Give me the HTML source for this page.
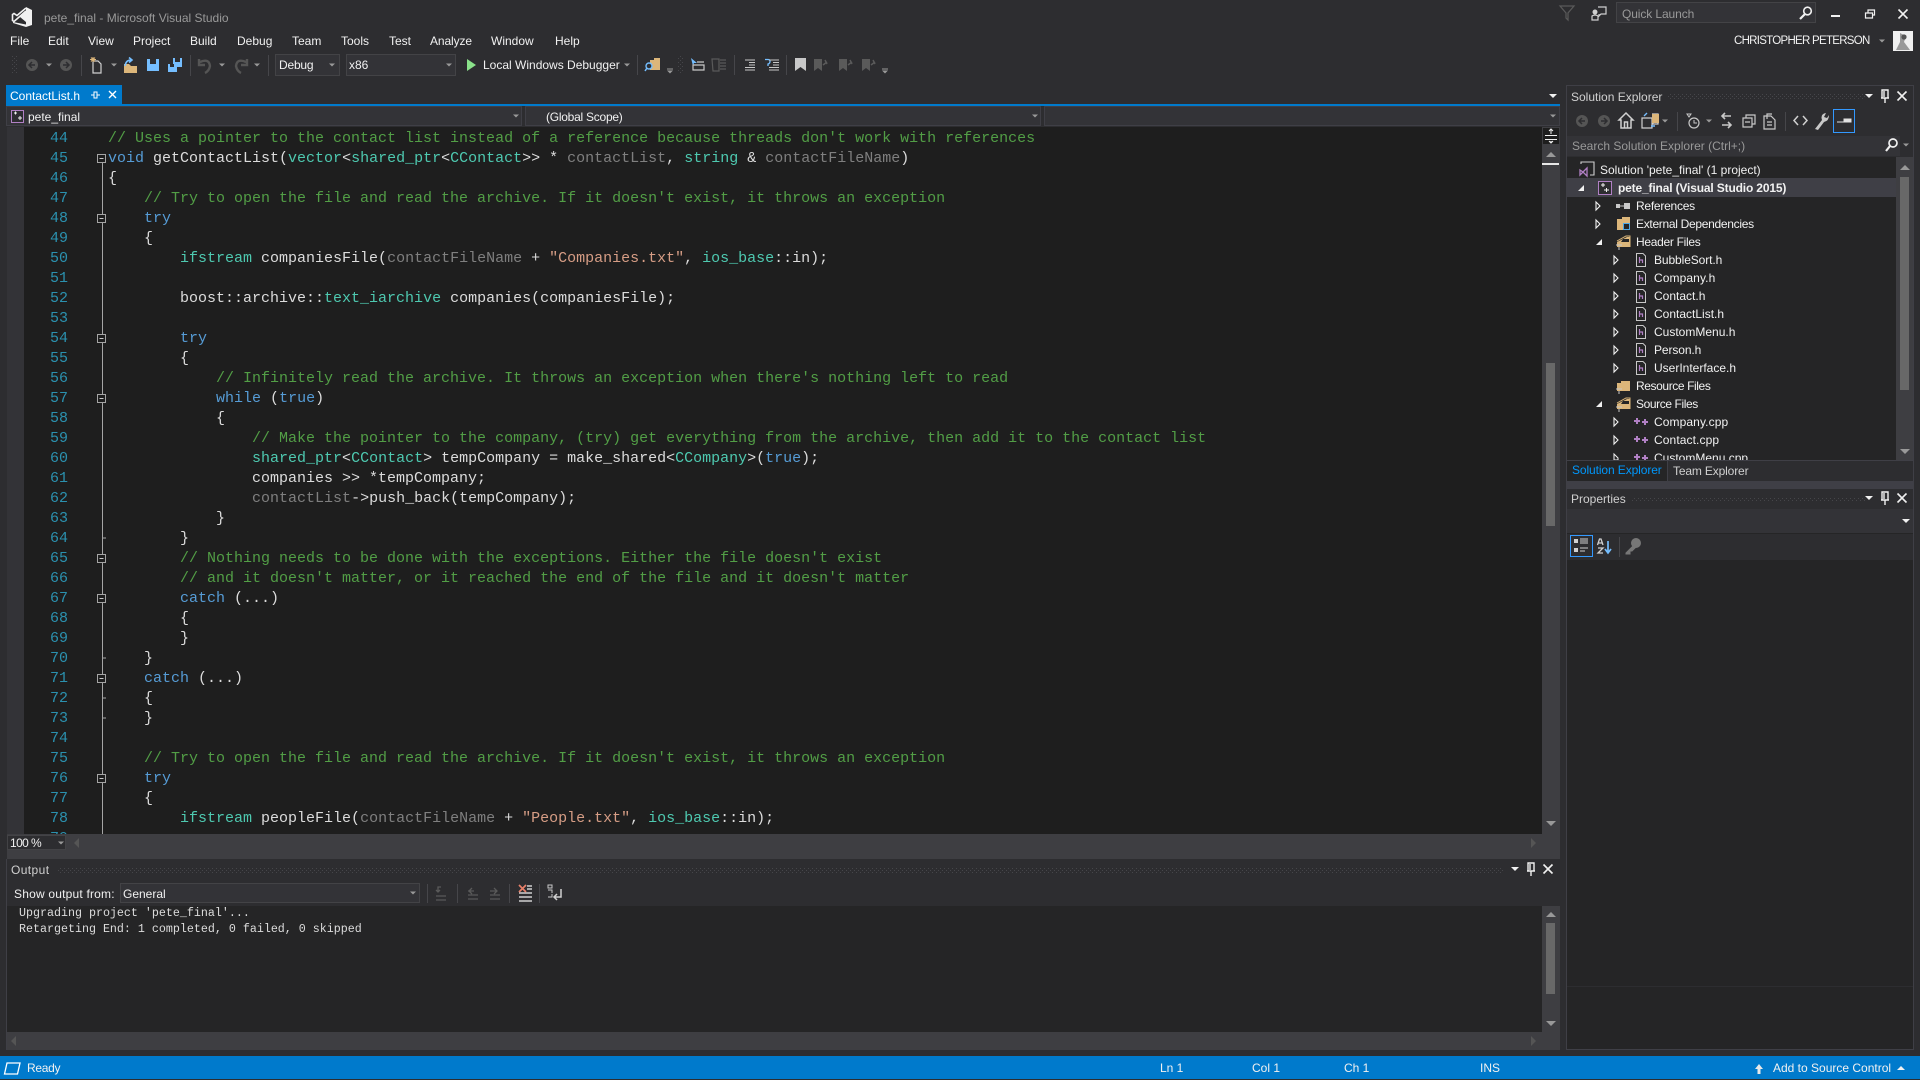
<!DOCTYPE html>
<html><head><meta charset="utf-8"><title>pete_final - Microsoft Visual Studio</title>
<style>
html,body{margin:0;padding:0;background:#2d2d30;width:1920px;height:1080px;overflow:hidden}
.b{position:absolute}
.t{position:absolute;font:12px/16px "Liberation Sans",sans-serif;color:#f1f1f1;white-space:pre}
#ed{position:absolute;left:24px;top:127px;width:1518px;height:707px;background:#1e1e1e;overflow:hidden}
.l,.n{position:absolute;font:15px/20px "Liberation Mono",monospace;white-space:pre;height:20px;margin-top:1px}
.l{left:84px;color:#dcdcdc}
.n{left:0;width:44px;text-align:right;color:#2b91af}
.c{color:#529e46}.k{color:#569cd6}.y{color:#4ec9b0}.s{color:#d69d85}.p{color:#7f7f7f}
.o{position:absolute;font:11.67px/15px "Liberation Mono",monospace;color:#dcdcdc;white-space:pre;left:19px}
svg{position:absolute;left:0;top:0}
</style></head><body>

<!-- panels -->
<div class="b" style="left:6px;top:85px;width:116px;height:19px;background:#007acc"></div>
<div class="b" style="left:6px;top:104px;width:1554px;height:2px;background:#007acc"></div>
<div class="b" style="left:6px;top:106px;width:516px;height:20px;background:#333337;border:1px solid #3f3f46;box-sizing:border-box"></div>
<div class="b" style="left:525px;top:106px;width:516px;height:20px;background:#333337;border:1px solid #3f3f46;box-sizing:border-box"></div>
<div class="b" style="left:1044px;top:106px;width:516px;height:20px;background:#333337;border:1px solid #3f3f46;box-sizing:border-box"></div>
<div class="b" style="left:7px;top:127px;width:17px;height:707px;background:#333337"></div>
<div class="b" style="left:1542px;top:127px;width:18px;height:707px;background:#3e3e42"></div>
<div class="b" style="left:7px;top:834px;width:1553px;height:25px;background:#3e3e42"></div>
<div class="b" style="left:7px;top:835px;width:59px;height:15px;background:#2d2d30;border:1px solid #434346;box-sizing:border-box"></div>
<div class="b" style="left:1546px;top:363px;width:9px;height:163px;background:#686868"></div>
<div class="b" style="left:1542px;top:163px;width:17px;height:2px;background:#e8e8e8"></div>
<div class="b" style="left:1543px;top:128px;width:16px;height:16px;background:#1e1e1e"></div>

<div class="b" style="left:6px;top:859px;width:1554px;height:191px;background:#2d2d30;border-left:1px solid #3f3f46;box-sizing:border-box"></div>
<div class="b" style="left:120px;top:883px;width:300px;height:20px;background:#333337;border:1px solid #434346;box-sizing:border-box"></div>
<div class="b" style="left:7px;top:906px;width:1535px;height:126px;background:#252526"></div>
<div class="b" style="left:1542px;top:906px;width:18px;height:144px;background:#3e3e42"></div>
<div class="b" style="left:7px;top:1032px;width:1553px;height:18px;background:#3e3e42"></div>
<div class="b" style="left:1546px;top:923px;width:9px;height:71px;background:#686868"></div>

<div class="b" style="left:1566px;top:85px;width:348px;height:396px;background:#2d2d30;border:1px solid #3f3f46;box-sizing:border-box"></div>
<div class="b" style="left:1567px;top:136px;width:346px;height:20px;background:#333337"></div>
<div class="b" style="left:1900px;top:136px;width:13px;height:20px;background:#2d2d30"></div>
<div class="b" style="left:1567px;top:157px;width:329px;height:303px;background:#252526"></div>
<div class="b" style="left:1896px;top:157px;width:17px;height:303px;background:#3e3e42"></div>
<div class="b" style="left:1900px;top:177px;width:9px;height:213px;background:#686868"></div>
<div class="b" style="left:1567px;top:178px;width:329px;height:19px;background:#3f3f46"></div>
<div class="b" style="left:1667px;top:461px;width:246px;height:20px;background:#2d2d30"></div>
<div class="b" style="left:1567px;top:460px;width:100px;height:21px;background:#252526"></div>
<div class="b" style="left:1566px;top:481px;width:348px;height:7px;background:#3f3f46"></div>
<div class="b" style="left:1566px;top:488px;width:348px;height:562px;background:#252526;border:1px solid #3f3f46;box-sizing:border-box"></div>
<div class="b" style="left:1567px;top:489px;width:346px;height:20px;background:#2d2d30"></div>
<div class="b" style="left:1567px;top:509px;width:346px;height:24px;background:#333337"></div>
<div class="b" style="left:1567px;top:534px;width:346px;height:26px;background:#2d2d30"></div>
<div class="b" style="left:1567px;top:986px;width:346px;height:1px;background:#2d2d30"></div>
<div class="b" style="left:0;top:1056px;width:1920px;height:23px;background:#007acc"></div>

<!-- toolbar combos -->
<div class="b" style="left:275px;top:54px;width:65px;height:22px;background:#333337;border:1px solid #434346;box-sizing:border-box"></div>
<div class="b" style="left:346px;top:54px;width:110px;height:22px;background:#333337;border:1px solid #434346;box-sizing:border-box"></div>
<div class="b" style="left:1616px;top:2px;width:200px;height:21px;background:#333337;border:1px solid #434346;box-sizing:border-box"></div>

<!-- editor -->
<div id="ed">
<div class="n" style="top:1px">44</div><div class="l c" style="top:1px">// Uses a pointer to the contact list instead of a reference because threads don't work with references</div>
<div class="n" style="top:21px">45</div><div class="l" style="top:21px"><span class="k">void</span> getContactList(<span class="y">vector</span>&lt;<span class="y">shared_ptr</span>&lt;<span class="y">CContact</span>&gt;&gt; * <span class="p">contactList</span>, <span class="y">string</span> &amp; <span class="p">contactFileName</span>)</div>
<div class="n" style="top:41px">46</div><div class="l" style="top:41px">{</div>
<div class="n" style="top:61px">47</div><div class="l c" style="top:61px">    // Try to open the file and read the archive. If it doesn't exist, it throws an exception</div>
<div class="n" style="top:81px">48</div><div class="l k" style="top:81px">    try</div>
<div class="n" style="top:101px">49</div><div class="l" style="top:101px">    {</div>
<div class="n" style="top:121px">50</div><div class="l" style="top:121px">        <span class="y">ifstream</span> companiesFile(<span class="p">contactFileName</span> + <span class="s">"Companies.txt"</span>, <span class="y">ios_base</span>::in);</div>
<div class="n" style="top:141px">51</div>
<div class="n" style="top:161px">52</div><div class="l" style="top:161px">        boost::archive::<span class="y">text_iarchive</span> companies(companiesFile);</div>
<div class="n" style="top:181px">53</div>
<div class="n" style="top:201px">54</div><div class="l k" style="top:201px">        try</div>
<div class="n" style="top:221px">55</div><div class="l" style="top:221px">        {</div>
<div class="n" style="top:241px">56</div><div class="l c" style="top:241px">            // Infinitely read the archive. It throws an exception when there's nothing left to read</div>
<div class="n" style="top:261px">57</div><div class="l" style="top:261px">            <span class="k">while</span> (<span class="k">true</span>)</div>
<div class="n" style="top:281px">58</div><div class="l" style="top:281px">            {</div>
<div class="n" style="top:301px">59</div><div class="l c" style="top:301px">                // Make the pointer to the company, (try) get everything from the archive, then add it to the contact list</div>
<div class="n" style="top:321px">60</div><div class="l" style="top:321px">                <span class="y">shared_ptr</span>&lt;<span class="y">CContact</span>&gt; tempCompany = make_shared&lt;<span class="y">CCompany</span>&gt;(<span class="k">true</span>);</div>
<div class="n" style="top:341px">61</div><div class="l" style="top:341px">                companies &gt;&gt; *tempCompany;</div>
<div class="n" style="top:361px">62</div><div class="l" style="top:361px">                <span class="p">contactList</span>-&gt;push_back(tempCompany);</div>
<div class="n" style="top:381px">63</div><div class="l" style="top:381px">            }</div>
<div class="n" style="top:401px">64</div><div class="l" style="top:401px">        }</div>
<div class="n" style="top:421px">65</div><div class="l c" style="top:421px">        // Nothing needs to be done with the exceptions. Either the file doesn't exist</div>
<div class="n" style="top:441px">66</div><div class="l c" style="top:441px">        // and it doesn't matter, or it reached the end of the file and it doesn't matter</div>
<div class="n" style="top:461px">67</div><div class="l" style="top:461px">        <span class="k">catch</span> (...)</div>
<div class="n" style="top:481px">68</div><div class="l" style="top:481px">        {</div>
<div class="n" style="top:501px">69</div><div class="l" style="top:501px">        }</div>
<div class="n" style="top:521px">70</div><div class="l" style="top:521px">    }</div>
<div class="n" style="top:541px">71</div><div class="l" style="top:541px">    <span class="k">catch</span> (...)</div>
<div class="n" style="top:561px">72</div><div class="l" style="top:561px">    {</div>
<div class="n" style="top:581px">73</div><div class="l" style="top:581px">    }</div>
<div class="n" style="top:601px">74</div>
<div class="n" style="top:621px">75</div><div class="l c" style="top:621px">    // Try to open the file and read the archive. If it doesn't exist, it throws an exception</div>
<div class="n" style="top:641px">76</div><div class="l k" style="top:641px">    try</div>
<div class="n" style="top:661px">77</div><div class="l" style="top:661px">    {</div>
<div class="n" style="top:681px">78</div><div class="l" style="top:681px">        <span class="y">ifstream</span> peopleFile(<span class="p">contactFileName</span> + <span class="s">"People.txt"</span>, <span class="y">ios_base</span>::in);</div>
<div class="n" style="top:701px">79</div>
</div>

<!-- text -->
<div class="t" style="left:44px;top:10px;color:#999">pete_final - Microsoft Visual Studio</div>
<div class="t" style="left:10px;top:33px">File</div>
<div class="t" style="left:48px;top:33px">Edit</div>
<div class="t" style="left:88px;top:33px">View</div>
<div class="t" style="left:133px;top:33px">Project</div>
<div class="t" style="left:190px;top:33px">Build</div>
<div class="t" style="left:237px;top:33px">Debug</div>
<div class="t" style="left:292px;top:33px">Team</div>
<div class="t" style="left:341px;top:33px">Tools</div>
<div class="t" style="left:389px;top:33px">Test</div>
<div class="t" style="left:430px;top:33px;letter-spacing:-.1px">Analyze</div>
<div class="t" style="left:491px;top:33px">Window</div>
<div class="t" style="left:555px;top:33px">Help</div>
<div class="t" style="left:279px;top:57px;letter-spacing:-.2px">Debug</div>
<div class="t" style="left:349px;top:57px">x86</div>
<div class="t" style="left:483px;top:57px">Local Windows Debugger</div>
<div class="t" style="left:10px;top:88px;color:#fff">ContactList.h</div>
<div class="t" style="left:28px;top:109px">pete_final</div>
<div class="t" style="left:546px;top:109px;letter-spacing:-.25px">(Global Scope)</div>
<div class="t" style="left:1622px;top:6px;color:#999;letter-spacing:-.1px">Quick Launch</div>
<div class="t" style="left:1734px;top:33px;font-size:11.5px;letter-spacing:-.72px">CHRISTOPHER PETERSON</div>
<div class="t" style="left:1571px;top:89px;color:#d0d0d0">Solution Explorer</div>
<div class="t" style="left:1572px;top:138px;color:#999">Search Solution Explorer (Ctrl+;)</div>
<div class="t" style="left:1600px;top:162px">Solution 'pete_final' (1 project)</div>
<div class="t" style="left:1618px;top:180px;font-weight:bold;letter-spacing:-.16px">pete_final (Visual Studio 2015)</div>
<div class="t" style="left:1636px;top:198px;letter-spacing:-.25px">References</div>
<div class="t" style="left:1636px;top:216px;letter-spacing:-.3px">External Dependencies</div>
<div class="t" style="left:1636px;top:234px;letter-spacing:-.3px">Header Files</div>
<div class="t" style="left:1654px;top:252px;letter-spacing:-.1px">BubbleSort.h</div>
<div class="t" style="left:1654px;top:270px;letter-spacing:.1px">Company.h</div>
<div class="t" style="left:1654px;top:288px">Contact.h</div>
<div class="t" style="left:1654px;top:306px">ContactList.h</div>
<div class="t" style="left:1654px;top:324px">CustomMenu.h</div>
<div class="t" style="left:1654px;top:342px;letter-spacing:-.1px">Person.h</div>
<div class="t" style="left:1654px;top:360px">UserInterface.h</div>
<div class="t" style="left:1636px;top:378px;letter-spacing:-.4px">Resource Files</div>
<div class="t" style="left:1636px;top:396px;letter-spacing:-.4px">Source Files</div>
<div class="t" style="left:1654px;top:414px;letter-spacing:.1px">Company.cpp</div>
<div class="t" style="left:1654px;top:432px;letter-spacing:.1px">Contact.cpp</div>
<div class="b" style="left:1567px;top:444px;width:329px;height:16px;overflow:hidden"><div class="t" style="left:87px;top:6px">CustomMenu.cpp</div></div>
<div class="t" style="left:1572px;top:462px;color:#0097fb;letter-spacing:-.1px">Solution Explorer</div>
<div class="t" style="left:1673px;top:463px;color:#d0d0d0;letter-spacing:-.15px">Team Explorer</div>
<div class="t" style="left:1571px;top:491px;color:#d0d0d0">Properties</div>
<div class="t" style="left:10px;top:835px;letter-spacing:-.6px">100 %</div>
<div class="t" style="left:11px;top:862px;color:#d0d0d0;letter-spacing:.4px">Output</div>
<div class="t" style="left:14px;top:886px;letter-spacing:.2px">Show output from:</div>
<div class="t" style="left:123px;top:886px">General</div>
<div class="o" style="top:906px">Upgrading project 'pete_final'...</div>
<div class="o" style="top:922px">Retargeting End: 1 completed, 0 failed, 0 skipped</div>
<div class="t" style="left:27px;top:1060px;letter-spacing:-.3px">Ready</div>
<div class="t" style="left:1160px;top:1060px">Ln 1</div>
<div class="t" style="left:1252px;top:1060px">Col 1</div>
<div class="t" style="left:1344px;top:1060px">Ch 1</div>
<div class="t" style="left:1480px;top:1060px">INS</div>
<div class="t" style="left:1773px;top:1060px">Add to Source Control</div>

<!-- icons -->
<svg width="1920" height="1080" viewBox="0 0 1920 1080">
<defs>
<pattern id="gr" width="4" height="4" patternUnits="userSpaceOnUse"><rect width="1" height="1" fill="#46464a"/><rect x="2" y="2" width="1" height="1" fill="#46464a"/></pattern>
<g id="dd"><path d="M-3 -1.5H3L0 1.5Z" fill="#999"/></g>
<g id="ddw"><path d="M-4 -2H4L0 2Z" fill="#f1f1f1"/></g>
<g id="pin"><path d="M-3 -6H3V2H-3ZM-1 -5V1M-4 2H4M0 2V7" fill="none" stroke="#f1f1f1" stroke-width="1.4"/></g>
<g id="x"><path d="M-4.5 -4.5L4.5 4.5M4.5 -4.5L-4.5 4.5" stroke="#f1f1f1" stroke-width="1.6"/></g>
<g id="back"><circle r="6" fill="#555"/><path d="M3 0H-3M0 -3L-3 0L0 3" fill="none" stroke="#2d2d30" stroke-width="1.5"/></g>
<g id="fwd"><circle r="6" fill="#555"/><path d="M-3 0H3M0 -3L3 0L0 3" fill="none" stroke="#2d2d30" stroke-width="1.5"/></g>
<g id="fold"><rect x="-4" y="-4" width="8" height="8" fill="#1e1e1e" stroke="#a5a5a5"/><path d="M-2 0H2" stroke="#c8c8c8"/></g>
<g id="te"><path d="M-2 -4L2 0L-2 4Z" fill="none" stroke="#f1f1f1" stroke-width="1.1"/></g>
<g id="tf"><path d="M3 -3V3H-3Z" fill="#f1f1f1"/></g>
<g id="h"><path d="M-4.5 -6.5H2L4.5 -4V6.5H-4.5Z" fill="none" stroke="#c8c8c8"/><path d="M-1.5 -3V3M-1.5 0H1.5V3" fill="none" stroke="#b180c5" stroke-width="1.2"/></g>
<g id="cpp"><path d="M-7 -1H-1M-4 -4V2M1 0H7M4 -3V3" stroke="#b180c5" stroke-width="2" fill="none"/></g>
<g id="fl"><path d="M-6 4V-3H-2V-5H7V5H-6Z" fill="#dcb67a"/><path d="M-7 3H-1M-4 5V8" stroke="#c8c8c8"/></g>
<g id="flo"><path d="M-6 5V0L4 -5H7V5Z" fill="#dcb67a"/><path d="M-6 -1L3 -6H7V5" fill="none" stroke="#dcb67a"/><path d="M-2 0H6V-3H0Z" fill="#252526"/><path d="M-7 3H-1M-4 5V8" stroke="#c8c8c8"/></g>
<g id="ind"><path d="M-4 -5H6M0 -2.5H6M0 0H6M-4 2.5H6M-4 5H6" stroke="#c8c8c8" stroke-width="1.1"/></g>
<g id="bmg"><path d="M-6 -6H2V6L-2 3L-6 6Z" fill="#5a5a5a"/><path d="M3 0L7 -3M5 -5L7 -1" stroke="#5a5a5a" stroke-width="1.5"/></g>
</defs>

<!-- logo -->
<path d="M26 7L32 10V25L26 27L13 23V22L26 24.5ZM26 11V22L20 17Z" fill="#f1f1f1"/>
<path d="M26 8L17 15.5L14 13.5L12.5 14.5V20.5L14 21.5L26 11" fill="none" stroke="#f1f1f1" stroke-width="1.6"/>

<!-- toolbar -->
<rect x="12" y="56" width="5" height="17" fill="url(#gr)"/>
<use href="#back" x="32" y="65"/><use href="#dd" x="49" y="65"/><use href="#fwd" x="66" y="65"/>
<path d="M81.5 55V76M190.5 55V76M268.5 55V76M637.5 55V75M734.5 55V75M786.5 55V75" stroke="#46464a"/>
<path d="M93 61H98L101 64V73H93Z" fill="none" stroke="#d0d0d0" stroke-width="1.2"/><path d="M93 57V62M90 59.5H96M91 57.5L95 61.5M95 57.5L91 61.5" stroke="#dcb67a"/>
<use href="#dd" x="114" y="65"/>
<path d="M124 64H129L131 66H137V73H124Z" fill="#dcb67a"/><path d="M125 66Q126 60 131 60M129 57.5L132 60L129 62.5" fill="none" stroke="#75beff" stroke-width="1.6"/>
<path d="M147 59H159V71H147Z" fill="#75beff"/><path d="M150 59H156V64H150Z" fill="#2d2d30"/>
<path d="M168 64H177V72H168Z M173 58H182V67H173Z" fill="#75beff"/><path d="M170 64H174V67H170ZM175 58H180V62H175Z" fill="#2d2d30"/>
<path d="M200 62Q209 58 210 66Q209 71 205 73M199 59V65H205" fill="none" stroke="#555" stroke-width="2.4"/><use href="#dd" x="222" y="65"/>
<path d="M246 62Q237 58 236 66Q237 71 241 73M247 59V65H241" fill="none" stroke="#555" stroke-width="2.4"/><use href="#dd" x="257" y="65"/>
<use href="#dd" x="332" y="65"/><use href="#dd" x="449" y="65"/>
<path d="M467 59L476 65L467 71Z" fill="#8ae28a"/>
<use href="#dd" x="627" y="65"/>
<path d="M650 60H654V58H660V70H650Z" fill="#dcb67a"/><circle cx="649" cy="66" r="3" fill="#2d2d30" stroke="#75beff" stroke-width="1.4"/><path d="M647 68L645 71" stroke="#75beff" stroke-width="1.5"/>
<path d="M667 69H673" stroke="#999"/><use href="#dd" x="670" y="72"/>
<rect x="678" y="56" width="5" height="17" fill="url(#gr)"/>
<path d="M691 58L697 63H694L693 66Z" fill="#75beff"/><path d="M693 65H704V70H693Z M697 62H704" fill="none" stroke="#c8c8c8" stroke-width="1.2"/>
<path d="M712 59H719V71H713ZM720 60H726M720 63H726M720 66H726M720 69H726" fill="none" stroke="#5a5a5a" stroke-width="1.2"/>
<use href="#ind" x="749" y="65"/>
<path d="M765 59.5H768Q770 59.5 770 61.5Q770 63.5 768 64V66" fill="none" stroke="#75beff" stroke-width="1.3"/><use href="#ind" x="773" y="65"/>
<path d="M795 58H806V71L800.5 67L795 71Z" fill="#c8c8c8"/>
<use href="#bmg" x="820" y="65"/><use href="#bmg" x="845" y="65"/><use href="#bmg" x="868" y="65"/>
<path d="M882 69H888" stroke="#999"/><use href="#dd" x="885" y="72"/>

<!-- top right -->
<path d="M1560 6H1574L1568 13V20L1566 18V13Z" fill="none" stroke="#5a5a5a" stroke-width="1.2"/>
<path d="M1598 7H1606V14H1601L1599 16V14M1592 20V16Q1595 14 1598 16V20Z" fill="none" stroke="#d0d0d0" stroke-width="1.2"/><circle cx="1595" cy="12" r="2.5" fill="#d0d0d0"/>
<circle cx="1807.5" cy="11" r="3.8" fill="none" stroke="#f1f1f1" stroke-width="1.6"/><path d="M1805 14L1800 19" stroke="#f1f1f1" stroke-width="2.2"/>
<path d="M1831 15H1840V17H1831Z" fill="#f1f1f1"/>
<path d="M1865.5 13H1872.5V18H1865.5ZM1868 13V10H1874.5V15H1872.5" fill="none" stroke="#f1f1f1" stroke-width="1.2"/>
<use href="#x" x="1903" y="14"/>
<use href="#dd" x="1882" y="41"/>
<rect x="1893" y="31" width="20" height="20" fill="#f0f0f0"/><path d="M1900 33L1906 36L1904 42L1910 50H1896L1900 42Z" fill="#999"/><circle cx="1904" cy="37" r="2.6" fill="#555"/>

<!-- tab -->
<path d="M91 95H94M94 92V98H97V92ZM97 95H100" fill="none" stroke="#fff"/>
<path d="M109 91L116 98M116 91L109 98" stroke="#fff" stroke-width="1.4"/>
<use href="#ddw" x="1553" y="96"/>
<use href="#dd" x="516" y="116"/><use href="#dd" x="1035" y="116"/><use href="#dd" x="1553" y="116"/>
<rect x="11.5" y="110.5" width="12" height="12" fill="#2d2d30" stroke="#b180c5"/><path d="M14 113H17M15.5 111.5V114.5M18 118H22M20 116V120" stroke="#f1f1f1"/>

<!-- editor decoration -->
<path d="M1545 135.5H1557M1545 139.5H1557" stroke="#f1f1f1"/><path d="M1551 129V134M1549 131L1551 129L1553 131M1551 141V143M1549 141L1551 143L1553 141" fill="none" stroke="#f1f1f1"/>
<path d="M1546 157L1551 152L1556 157Z" fill="#999"/>
<path d="M1546 821H1556L1551 826Z" fill="#999"/>
<path d="M102.5 163V834" stroke="#a5a5a5" stroke-width="1"/>
<path d="M102 538H106M102 558H106M102 658H106M102 698H106M102 718H106" stroke="#a5a5a5" stroke-width="1"/>
<use href="#fold" x="101.5" y="158.5"/><use href="#fold" x="101.5" y="218.5"/><use href="#fold" x="101.5" y="338.5"/><use href="#fold" x="101.5" y="398.5"/><use href="#fold" x="101.5" y="558.5"/><use href="#fold" x="101.5" y="598.5"/><use href="#fold" x="101.5" y="678.5"/><use href="#fold" x="101.5" y="778.5"/>
<use href="#dd" x="61" y="843"/>
<path d="M79 838V848L74 843Z" fill="#555"/><path d="M1531 838V848L1536 843Z" fill="#555"/>

<!-- output -->
<rect x="57" y="868" width="1446" height="5" fill="url(#gr)"/>
<use href="#ddw" x="1515" y="869"/><use href="#pin" x="1531" y="869"/><use href="#x" x="1548" y="869"/>
<use href="#dd" x="413" y="893"/>
<path d="M427.5 884V903M457.5 884V903M509.5 884V903M539.5 884V903" stroke="#46464a"/>
<path d="M436 896H446M436 900H446M441 887H438V892M440 890L438 892L436 890" fill="none" stroke="#5a5a5a" stroke-width="1.3"/>
<path d="M468 895H478M468 899H478M468 891H474M472 888L469 891L472 894" fill="none" stroke="#5a5a5a" stroke-width="1.3"/>
<path d="M490 895H500M490 899H500M490 891H496M494 888L497 891L494 894" fill="none" stroke="#5a5a5a" stroke-width="1.3"/>
<path d="M519 893H532M519 897H532M519 901H532M527 886H532M527 889H532" stroke="#d0d0d0" stroke-width="1.6"/><path d="M519 885L526 892M526 885L519 892" stroke="#e8806a" stroke-width="1.7"/>
<path d="M548 885H552V888H548ZM548 890H552V893M548 897H552V894" fill="none" stroke="#c8c8c8"/><path d="M561 889V897H554M557 894L554 897L557 900" fill="none" stroke="#d0d0d0" stroke-width="1.5"/>
<path d="M1546 917L1551 912L1556 917Z" fill="#999"/><path d="M1546 1021H1556L1551 1026Z" fill="#999"/>
<path d="M16 1036V1046L11 1041Z" fill="#555"/><path d="M1531 1036V1046L1536 1041Z" fill="#555"/>

<!-- solution explorer -->
<rect x="1668" y="94" width="197" height="5" fill="url(#gr)"/>
<use href="#ddw" x="1869" y="96"/><use href="#pin" x="1885" y="96"/><use href="#x" x="1902" y="96"/>
<use href="#back" x="1582" y="121"/><use href="#fwd" x="1604" y="121"/>
<path d="M1626 113L1619 120H1621V128H1631V120H1633ZM1624.5 128V122H1627.5V128" fill="none" stroke="#d0d0d0" stroke-width="1.5"/>
<path d="M1644 118H1652V128H1642V118ZM1652 114H1658V124H1653V114" fill="none" stroke="#d0d0d0" stroke-width="1.2"/><path d="M1652 114H1659V123H1652Z" fill="#dcb67a"/><path d="M1644 116L1647 113M1655 126H1651" stroke="#75beff" stroke-width="1.4"/>
<use href="#dd" x="1665" y="121"/><path d="M1677.5 112V131M1785.5 112V131" stroke="#46464a"/>
<circle cx="1694" cy="123" r="5" fill="none" stroke="#c8c8c8" stroke-width="1.2"/><path d="M1694 120V123H1697M1687 114H1691L1689 117Z" fill="none" stroke="#c8c8c8"/>
<use href="#dd" x="1709" y="121"/>
<path d="M1722 116H1731M1725 113L1722 116L1725 119M1731 125H1722M1728 122L1731 125L1728 128" fill="none" stroke="#c8c8c8" stroke-width="1.6"/>
<path d="M1743 118H1752V127H1743ZM1746 118V115H1755V124H1752M1745 122H1750" fill="none" stroke="#c8c8c8" stroke-width="1.2"/>
<path d="M1764 116H1771L1775 120V129H1764ZM1767 119V114H1772M1767 122H1772M1767 125H1772" fill="none" stroke="#c8c8c8" stroke-width="1.2"/>
<path d="M1798 116L1794 120.5L1798 125M1803 116L1807 120.5L1803 125" fill="none" stroke="#d0d0d0" stroke-width="1.5"/>
<path d="M1815 129L1822 120Q1820 114 1826 113L1824 117L1827 118L1829 115Q1829 121 1824 122L1818 130Z" fill="#c8c8c8"/>
<rect x="1833.5" y="109.5" width="21" height="23" fill="none" stroke="#3399ff"/><path d="M1837 122H1851M1844 119H1851V122H1844Z" fill="#e0e0e0" stroke="#e0e0e0"/>
<circle cx="1893" cy="143" r="4" fill="none" stroke="#f1f1f1" stroke-width="1.7"/><path d="M1890 146L1886 151" stroke="#f1f1f1" stroke-width="2.2"/>
<use href="#dd" x="1906" y="145"/>
<path d="M1900 170L1905 165L1910 170Z" fill="#999"/><path d="M1900 449H1910L1905 454Z" fill="#999"/>
<path d="M1581 164V162H1594V175H1590" fill="none" stroke="#d0d0d0" stroke-width="1.1"/><path d="M1580 170L1583 172L1587 168V176L1583 172L1580 175Z" fill="none" stroke="#b180c5" stroke-width="1.3"/>
<use href="#tf" x="1581" y="188"/>
<rect x="1598.5" y="181.5" width="13" height="13" fill="#2d2d30" stroke="#b180c5"/><path d="M1601 185H1605M1603 183V187M1604 190H1609M1606.5 188V192" stroke="#f1f1f1"/>
<use href="#te" x="1598" y="206"/><use href="#te" x="1598" y="224"/><use href="#tf" x="1599" y="242"/>
<path d="M1616 204H1620V208H1616ZM1624 203H1630V209H1624Z" fill="#c8c8c8"/><path d="M1620 206H1624" stroke="#c8c8c8"/>
<path d="M1617 219H1622V217H1630V230H1617Z" fill="#dcb67a"/><rect x="1623.5" y="223.5" width="6" height="6" fill="#252526" stroke="#4da8e6"/>
<use href="#flo" x="1623" y="242"/><use href="#fl" x="1623" y="386"/><use href="#flo" x="1623" y="404"/>
<use href="#tf" x="1599" y="404"/>
<use href="#te" x="1616" y="260"/><use href="#te" x="1616" y="278"/><use href="#te" x="1616" y="296"/><use href="#te" x="1616" y="314"/><use href="#te" x="1616" y="332"/><use href="#te" x="1616" y="350"/><use href="#te" x="1616" y="368"/>
<use href="#h" x="1641" y="260"/><use href="#h" x="1641" y="278"/><use href="#h" x="1641" y="296"/><use href="#h" x="1641" y="314"/><use href="#h" x="1641" y="332"/><use href="#h" x="1641" y="350"/><use href="#h" x="1641" y="368"/>
<use href="#te" x="1616" y="422"/><use href="#te" x="1616" y="440"/>
<use href="#cpp" x="1641" y="422"/><use href="#cpp" x="1641" y="440"/>
<svg x="1567" y="450" width="329" height="10"><path d="M47 4L51 8V10H47Z" fill="none" stroke="#f1f1f1"/><path d="M67 7H73M70 4V10M75 8H81M78 5V10" stroke="#b180c5" stroke-width="2"/></svg>
<path d="M1566.5 460.5H1667M1667.5 460V481" stroke="#3f3f46"/><path d="M1667 460.5H1913" stroke="#3f3f46"/>

<!-- properties -->
<rect x="1632" y="497" width="233" height="5" fill="url(#gr)"/>
<use href="#ddw" x="1869" y="498"/><use href="#pin" x="1885" y="498"/><use href="#x" x="1902" y="498"/>
<use href="#ddw" x="1906" y="521"/>
<rect x="1570.5" y="535.5" width="22" height="21" fill="none" stroke="#3399ff"/>
<path d="M1574 539H1578V543H1574ZM1574 548H1578V552H1574Z" fill="#d0d0d0"/><path d="M1580 539H1588M1580 541H1588M1580 543H1588M1580 548H1588M1580 551H1585" stroke="#d0d0d0"/>
<path d="M1597.5 545L1599.5 539H1601L1603 545M1598.5 543H1602M1598 548H1603L1598 553H1603" fill="none" stroke="#d0d0d0" stroke-width="1.3"/><path d="M1608 541V552M1605 549L1608 553L1611 549" fill="none" stroke="#75beff" stroke-width="1.7"/>
<path d="M1619.5 537V557" stroke="#46464a"/>
<circle cx="1636" cy="543" r="5" fill="#777"/><path d="M1633 546L1626 553V554H1630V551H1632L1636 547" fill="#777" stroke="#777"/>

<!-- status -->
<path d="M7 1063H20L17.5 1074H4.5Z" fill="none" stroke="#fff" stroke-width="1.3"/>
<path d="M1759 1064L1755 1069H1757.5V1074H1760.5V1069H1763Z" fill="#e8e8e8"/>
<path d="M1897 1070L1901 1066L1905 1070Z" fill="#f1f1f1"/>
</svg>
</body></html>
